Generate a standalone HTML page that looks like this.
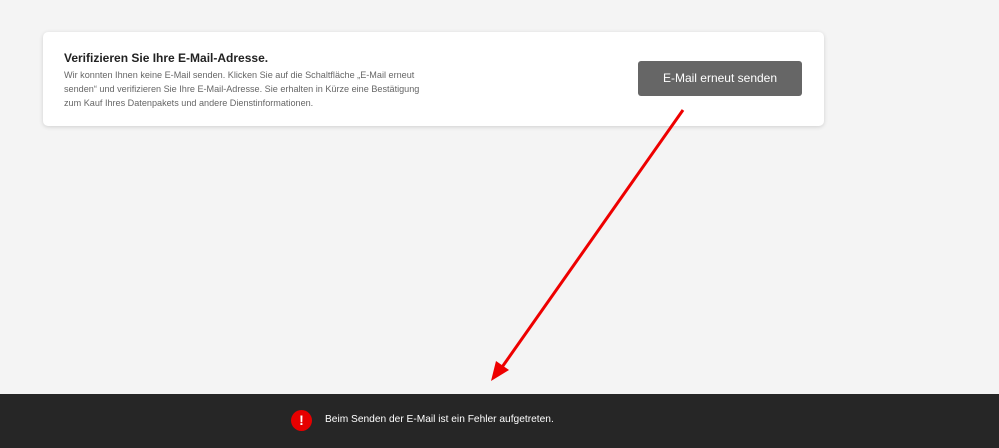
<!DOCTYPE html>
<html><head><meta charset="utf-8"><style>
body{margin:0;width:999px;height:448px;background:#f4f4f4;position:relative;overflow:hidden;font-family:"Liberation Sans",sans-serif}
.card{position:absolute;left:43px;top:32px;width:781px;height:94px;background:#fff;border-radius:5px;box-shadow:0 1px 4px rgba(0,0,0,.15)}
h1{position:absolute;left:21px;top:19px;margin:0;font-size:12px;font-weight:bold;color:#222}
p{position:absolute;left:21px;top:36px;margin:0;font-size:9.1px;line-height:14px;color:#666;width:370px}
.btn{position:absolute;left:595px;top:29px;width:164px;height:35px;background:#666;border-radius:3px;color:#fff;font-size:12px;line-height:35px;text-align:center}
.bar{position:absolute;left:0;top:394px;width:999px;height:54px;background:#262626}
.ic{position:absolute;left:291px;top:16px;width:21px;height:21px;border-radius:50%;background:#e60000;color:#fff;font-weight:bold;font-size:14px;line-height:21px;text-align:center}
.msg{position:absolute;left:325px;top:20px;color:#fff;font-size:10.2px}
svg{position:absolute;left:0;top:0}
</style></head><body>
<div class="card"><h1>Verifizieren Sie Ihre E-Mail-Adresse.</h1>
<p>Wir konnten Ihnen keine E-Mail senden. Klicken Sie auf die Schaltfläche „E-Mail erneut senden“ und verifizieren Sie Ihre E-Mail-Adresse. Sie erhalten in Kürze eine Bestätigung zum Kauf Ihres Datenpakets und andere Dienstinformationen.</p>
<div class="btn">E-Mail erneut senden</div></div>
<div class="bar"><div class="ic">!</div><div class="msg">Beim Senden der E-Mail ist ein Fehler aufgetreten.</div></div>
<svg width="999" height="448"><line x1="683" y1="110" x2="500" y2="370" stroke="#e00" stroke-width="3"/><polygon points="491,381 496,361 509,370" fill="#e00"/></svg>
</body></html>
